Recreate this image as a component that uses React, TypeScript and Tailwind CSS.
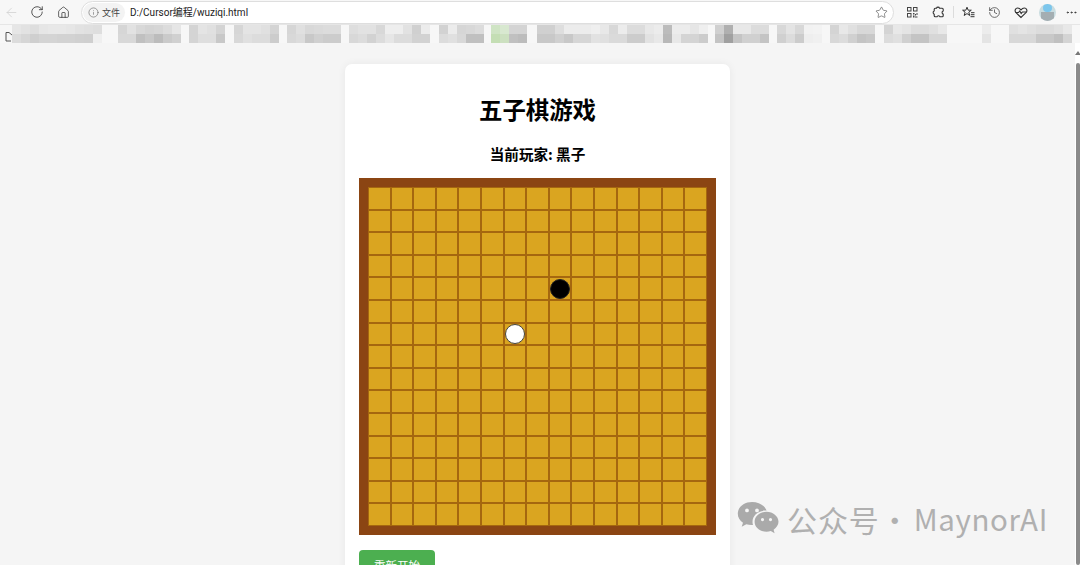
import React from "react";
import { ArrowLeft, RotateCw, Home, Info, Star, History, MoreHorizontal } from "lucide-react";

type Group = { gap: number; a: string[]; b: string[] };
const h = (s: string) => s.split(" ").map((x) => "#" + x);
const groups: Group[] = [
  { gap: 12, a: h("e6e6e6 e2e2e2 dedede e6e6e6 e8e8e8 e8e8e8 e6e6e6 e2e2e2 e0e0e0 dedede"), b: h("dcdcdc d6d6d6 cfcfcf d4d4d4 d4d4d4 d2d2d2 d2d2d2 d0d0d0 cfcfcf efefef") },
  { gap: 16, a: h("d6d6d6 e2e2e2 d8d8d8 d4d4d4 d6d6d6 dcdcdc e6e6e6"), b: h("d8d8d8 d8d8d8 c0c0c0 c8c8c8 bcbcbc cacaca d0d0d0") },
  { gap: 8, a: h("d4d4d4 e4e4e4 e0e0e0 d4d4d4"), b: h("d4d4d4 dedede dedede c8c8c8") },
  { gap: 9, a: h("d6d6d6 e4e4e4 e4e4e4 e0e0e0 d4d4d4"), b: h("d8d8d8 e0e0e0 dcdcdc dcdcdc cccccc") },
  { gap: 8, a: h("d6d6d6 e0e0e0 d8d8d8 dadada dcdcdc dcdcdc"), b: h("d8d8d8 dcdcdc c8c8c8 d0d0d0 cccccc cccccc") },
  { gap: 8, a: h("dedede e2e2e2 e2e2e2 d8d8d8 eeeeee eeeeee e2e2e2 d0d0d0 ececec"), b: h("d8d8d8 dcdcdc d2d2d2 dcdcdc e6e6e6 dcdcdc dcdcdc d2d2d2 d2d2d2") },
  { gap: 9, a: h("d2d2d2 ececec d6d6d6 d8d8d8 dcdcdc"), b: h("dcdcdc e0e0e0 d8d8d8 c0c0c0 c0c0c0") },
  { gap: 7, a: h("cfe4c4 d8e8d0 d4d4d4 d4d4d4"), b: h("c4deb4 cce0c0 c0c0c0 bcbcbc") },
  { gap: 10, a: h("d0d0d0 d0d0d0 dedede ececec ececec ececec efefef e8e8e8 d8d8d8 ececec dcdcdc dcdcdc e8e8e8 ececec bcbcbc ececec ececec e6e6e6 efefef"), b: h("c8c8c8 c8c8c8 d0d0d0 c8c8c8 d6d6d6 d6d6d6 e2e2e2 e0e0e0 dadada dadada cccccc cccccc e2e2e2 e8e8e8 b8b8b8 e8e8e8 d4d4d4 d4d4d4 cccccc") },
  { gap: 7, a: h("d0d0d0 b0b0b0 e8e8e8 e8e8e8 dcdcdc dcdcdc"), b: h("c4c4c4 a0a0a0 c4c4c4 d0d0d0 d0d0d0 c4c4c4") },
  { gap: 8, a: h("d8d8d8 e4e4e4 d8d8d8 f2f2f2 f3f3f3"), b: h("d0d0d0 dcdcdc cccccc eeeeee f0f0f0") },
  { gap: 8, a: h("d4d4d4 e8e8e8 e0e0e0 d8d8d8 d8d8d8"), b: h("d8d8d8 dcdcdc d0d0d0 c4c4c4 c8c8c8") },
  { gap: 9, a: h("d4d4d4 e8e8e8 e4e4e4 dcdcdc dcdcdc e0e0e0 e8e8e8"), b: h("dcdcdc e0e0e0 d0d0d0 c4c4c4 c4c4c4 d6d6d6 d6d6d6") },
  { gap: 35, a: h("ececec"), b: h("e4e4e4") },
  { gap: 18, a: h("e0e0e0 e4e4e4 e0e0e0 dcdcdc dcdcdc e0e0e0 e8e8e8"), b: h("d8d8d8 d8d8d8 d8d8d8 c8c8c8 c8c8c8 c0c0c0 d4d4d4") },
];

const ui = { fontFamily: 'Roboto,"Noto Sans CJK SC",sans-serif' };
const cjk = { fontFamily: '"Noto Sans CJK SC","Noto Sans",sans-serif' };

function Mosaic() {
  return (
    <div className="flex h-[18px] bg-[#f7f7f7] relative">
      <svg className="absolute left-[5px] top-[6px]" width="8" height="11" viewBox="0 0 8 11" fill="none" stroke="#555" strokeWidth="1">
        <path d="M1 10V1.500h3l3 2.500" />
        <path d="M1 10h5" />
      </svg>
      {groups.map((g, i) => (
        <div key={i} className="flex flex-col shrink-0" style={{ marginLeft: g.gap }}>
          <div className="flex h-[9px]">
            {g.a.map((c, j) => (
              <div key={j} className="w-[9px]" style={{ backgroundColor: c }} />
            ))}
          </div>
          <div className="flex h-[9px]">
            {g.b.map((c, j) => (
              <div key={j} className="w-[9px]" style={{ backgroundColor: c }} />
            ))}
          </div>
        </div>
      ))}
    </div>
  );
}

function Toolbar() {
  return (
    <div className="flex items-center h-[25px] bg-[#f7f7f7] border-b border-[#e6e6e6]" style={ui}>
      <ArrowLeft size={15} strokeWidth={1.2} className="ml-[4px] text-[#cfcfcf]" />
      <RotateCw size={14} strokeWidth={1.4} className="ml-[11px] text-[#333]" />
      <Home size={13} strokeWidth={1.4} className="ml-[13px] text-[#333]" />
      <div className="ml-[11px] flex items-center h-[23px] w-[813px] bg-white rounded-full border border-[#dedede]">
        <div className="flex items-center ml-[1px] h-[19px] w-[42px] rounded-full bg-[#f3f3f3] text-[#444]">
          <Info size={11} strokeWidth={1.2} className="ml-[5px] text-[#555]" />
          <span className="ml-[3px] text-[9px] leading-none" style={cjk}>文件</span>
        </div>
        <span className="ml-[5px] text-[10px] leading-none text-[#222] whitespace-nowrap">
          D:/Cursor<span style={cjk}>编程</span>/wuziqi.html
        </span>
        <Star size={13} strokeWidth={1.1} className="ml-auto mr-[5px] text-[#444]" />
      </div>
      <svg className="ml-[13px]" width="11" height="11" viewBox="0 0 11 11" fill="#444" stroke="none">
        <path d="M0 0h4.500v4.500H0zM1 1v2.500h2.500V1zM6 0h4.500v4.500H6zM7 1v2.500h2.500V1zM0 6h4.500v4.500H0zM1 7v2.500h2.500V7z" fillRule="evenodd" />
        <path d="M6 6h1.500v1.500H6zM8 7h1v1.500H8zM9.500 6h1v2h-1zM6 8.500h1.500V10.500H6zM8 9.500h2.500v1H8z" />
      </svg>
      <svg className="ml-[14px]" width="13" height="13" viewBox="0 0 13 13" fill="none" stroke="#333" strokeWidth="1.1">
        <path d="M4.500 2.200c.4-1.400 2.600-1.400 3 0h2.700c.6 0 1 .4 1 1v1.700c-1.500.2-1.500 2.900 0 3.200v1.700c0 .6-.4 1-1 1H8c-.3-1.500-2.700-1.500-3 0H3.200c-.6 0-1-.4-1-1V8.300C.8 8 .8 5.200 2.200 4.900V3.200c0-.6.4-1 1-1z" />
      </svg>
      <div className="ml-[8px] w-px h-[12px] bg-[#dcdcdc]" />
      <svg className="ml-[8px]" width="13" height="13" viewBox="0 0 13 13" fill="none" stroke="#333" strokeWidth="1">
        <path d="M5 1.200l1.200 3h3.100l-2.500 2 .9 3.300-2.700-1.900-2.800 1.900.9-3.300L.6 4.200h3.200z" />
        <path d="M9 6.700h3.500M8.800 8.700h3.700M8.500 10.700h4" />
      </svg>
      <History size={13} strokeWidth={1.3} className="ml-[13px] text-[#333]" />
      <svg className="ml-[13px]" width="14" height="13" viewBox="0 0 14 13" fill="none" stroke="#333" strokeWidth="1.1">
        <path d="M7 11.500 2 6.700C.3 5 1.200 2 3.700 2c1.400 0 2.500.8 3.300 1.800C7.800 2.800 8.900 2 10.300 2c2.500 0 3.400 3 1.700 4.700z" />
        <path d="M1.500 6.500h3l1.300-1.500 1.400 2.500 1.200-1.500h4" />
      </svg>
      <div className="ml-[11px] w-[17px] h-[17px] rounded-full bg-[#c8dce0] overflow-hidden flex flex-col items-center">
        <div className="w-[9px] h-[8px] rounded-full bg-[#7cc6ec]" />
        <div className="w-[13px] h-[9px] bg-[#a4aeb2]" />
      </div>
      <MoreHorizontal size={13} strokeWidth={1.6} className="ml-[9px] text-[#333]" />
    </div>
  );
}

function Board() {
  const cells = Array.from({ length: 225 }, (_, i) => i);
  return (
    <div className="shrink-0 w-[357px] h-[357px] mt-[14px] border-[9px] border-[#8b4513] grid grid-cols-15 grid-rows-15">
      {cells.map((i) => (
        <div key={i} className="relative flex items-center justify-center bg-[#daa520] border border-[#a5670f]">
          {i === 4 * 15 + 8 && <div className="absolute w-[20px] h-[20px] rounded-full bg-black border border-[#222]" />}
          {i === 6 * 15 + 6 && <div className="absolute w-[20px] h-[20px] rounded-full bg-white border border-[#444]" />}
        </div>
      ))}
    </div>
  );
}

export default function App() {
  return (
    <div className="w-[1080px] h-[565px] overflow-hidden flex flex-col bg-[#f5f5f5]">
      <Toolbar />
      <Mosaic />
      <div className="relative flex-1 flex justify-center items-start bg-[#f5f5f5] overflow-hidden rounded-tl-[6px]">
        <div className="shrink-0 mt-[21px] mr-[5px] w-[385px] h-[560px] px-[14px] bg-white rounded-[7px] shadow-[0_0_8px_rgba(0,0,0,0.06)] flex flex-col items-center" style={cjk}>
          <h1 className="mt-[28px] text-[23.400px] leading-[34px] font-bold text-black">五子棋游戏</h1>
          <div className="mt-[17px] text-[14.600px] leading-[21px] font-bold text-black">当前玩家: 黑子</div>
          <Board />
          <button className="self-start shrink-0 mt-[15px] w-[76px] h-[32px] rounded-[4px] bg-[#4caf50] text-white text-[11.500px] leading-none">重新开始</button>
        </div>
        <div className="absolute right-0 top-0 bottom-0 w-[5px] bg-white flex flex-col items-center">
          <div className="mt-[8px] w-0 h-0 border-x-[3px] border-x-transparent border-b-[4px] border-b-[#777]" />
          <div className="mt-[8px] w-[4px] flex-1 rounded-full bg-[#8a8a8a]" />
        </div>
        <div className="absolute left-[737px] top-[458px] flex items-center text-[#b0b0b0]">
          <svg width="42" height="35" viewBox="0 0 42 35" fill="#aaaaaa">
            <path fillRule="evenodd" d="M15 1C6.900 1 .8 6.200.8 12.700c0 3.700 2 6.800 5.200 9l-1.300 4 4.600-2.400c1.700.5 3.400.8 5.300.8.500 0 1 0 1.400-.1-.3-1-.5-2-.5-3.100 0-6.400 5.500-11.300 12.700-11.300.4 0 .9 0 1.300.1C28.400 5 22.200 1 15 1zM10 7.500a1.900 1.900 0 110 3.800 1.900 1.900 0 010-3.800zm10 0a1.900 1.900 0 110 3.800 1.900 1.900 0 010-3.800z" />
            <path fillRule="evenodd" d="M41.500 20.800c0-5.600-5.600-10-11.900-10-6.700 0-12 4.400-12 10s5.300 10 12 10c1.400 0 2.800-.3 4.200-.7l3.800 2.100-1-3.500c2.900-2.100 4.900-4.800 4.900-7.900zM25.500 17a1.600 1.600 0 110 3.200 1.600 1.600 0 010-3.200zm8 0a1.600 1.600 0 110 3.200 1.600 1.600 0 010-3.200z" />
          </svg>
          <div className="ml-[8px] flex text-[30px] leading-none whitespace-nowrap" style={cjk}>
            <span className="tracking-[0.9px]">公众号</span>
            <span className="w-[30px] text-center">·</span>
            <span className="ml-[4px] text-[29.500px] tracking-[0.6px]">MaynorAI</span>
          </div>
        </div>
      </div>
    </div>
  );
}
